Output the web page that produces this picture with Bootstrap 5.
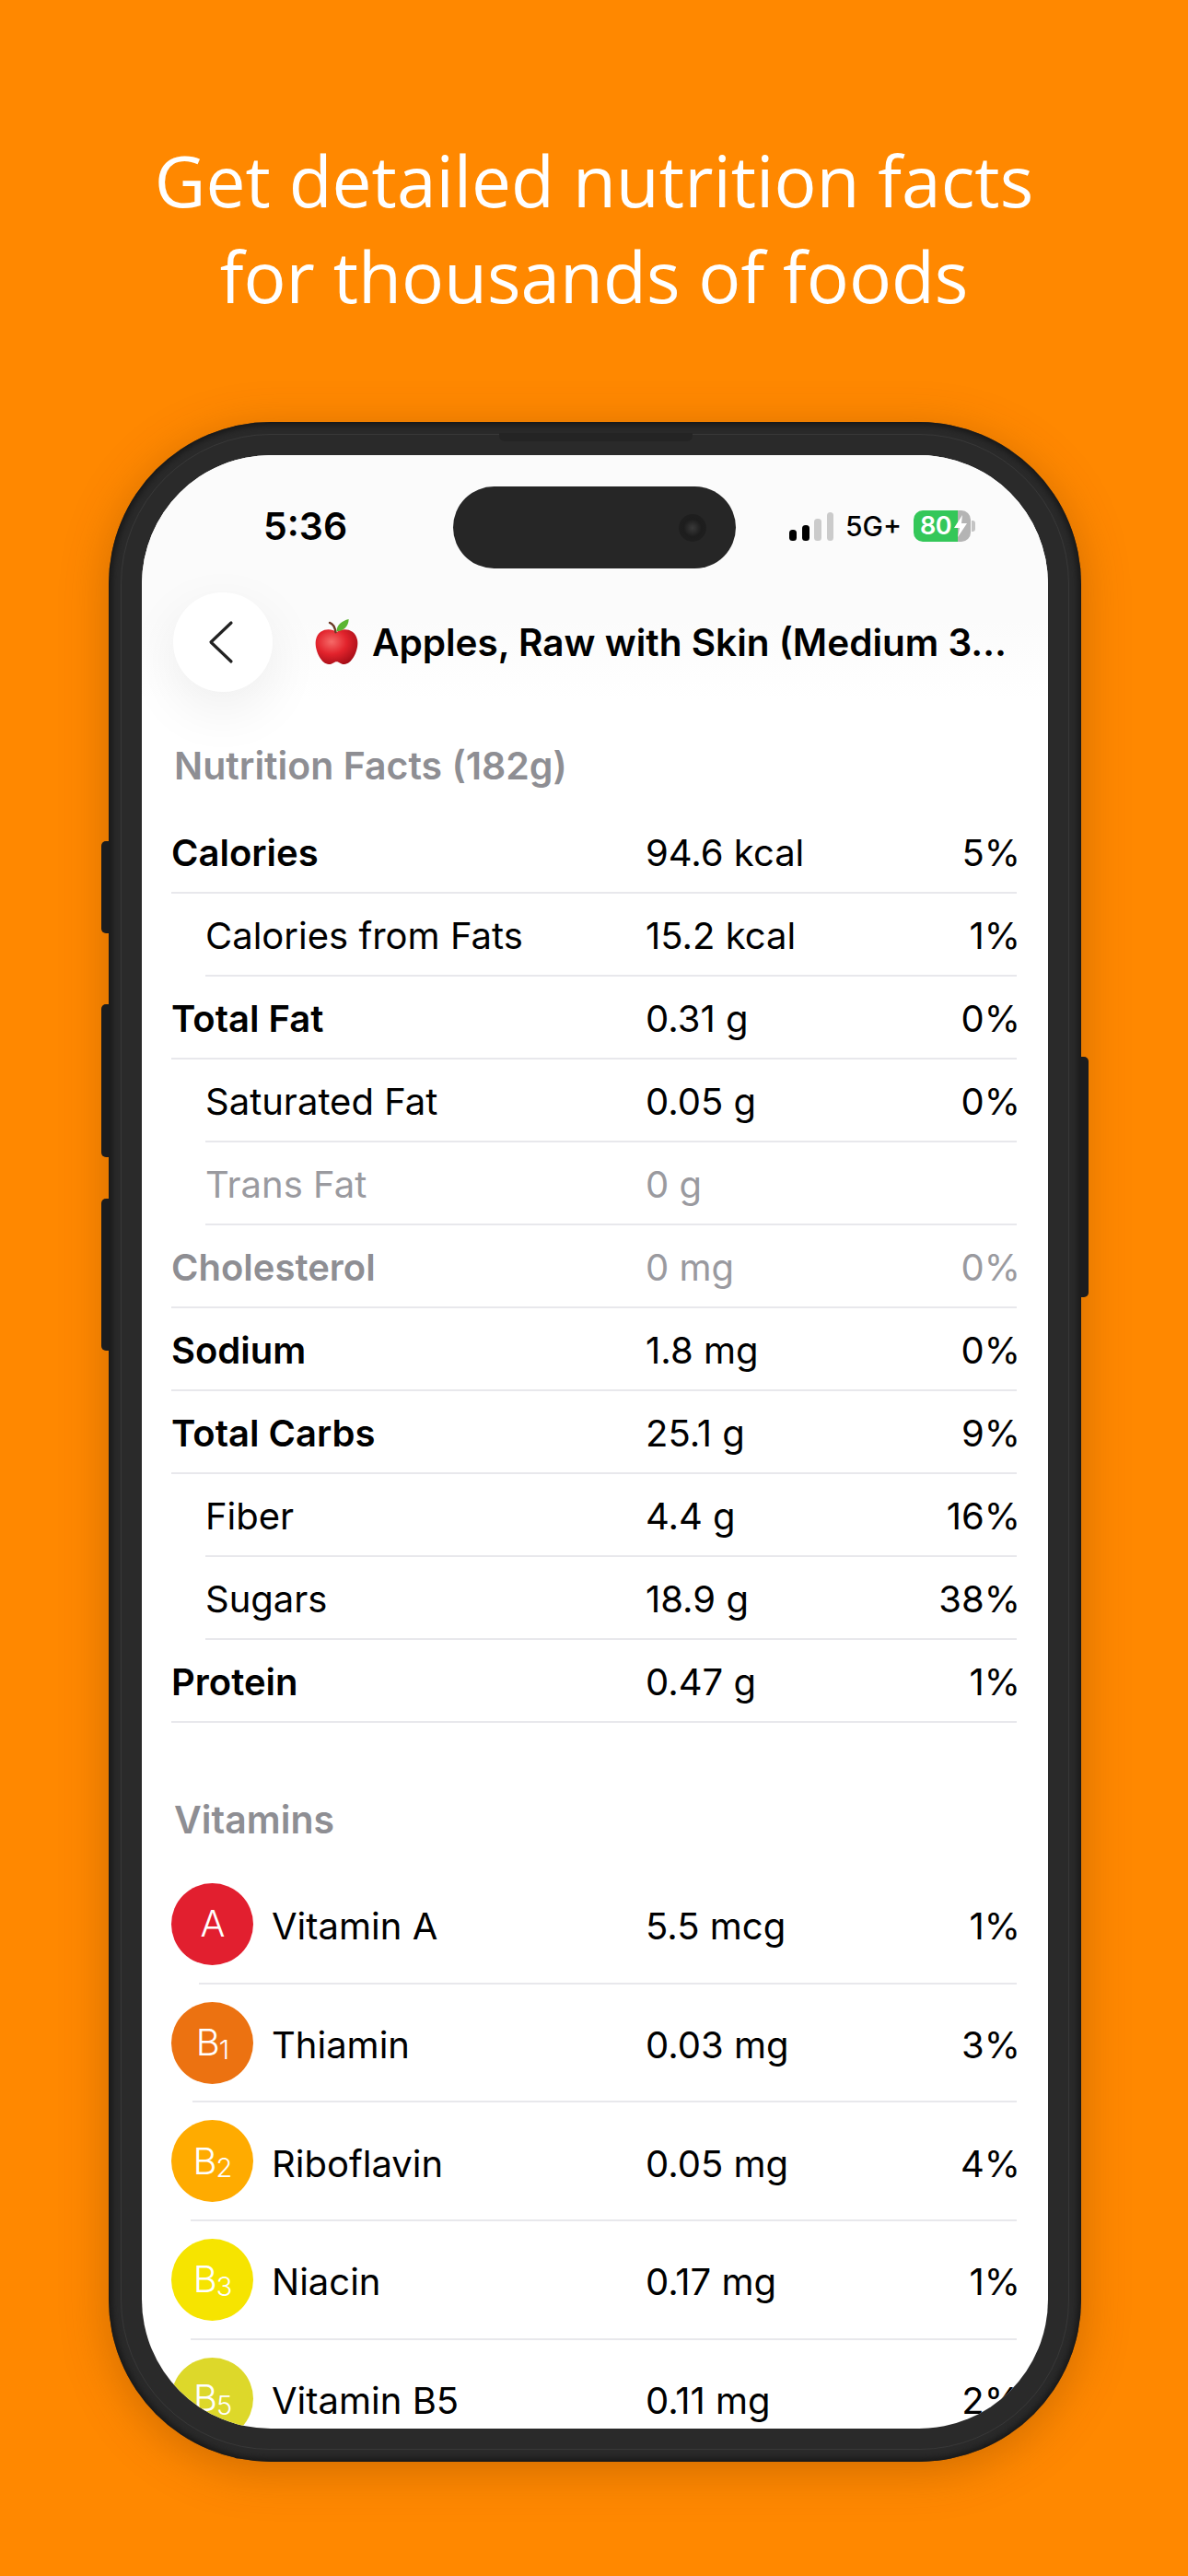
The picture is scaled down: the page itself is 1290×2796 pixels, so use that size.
<!DOCTYPE html>
<html lang="en">
<head>
  <meta charset="UTF-8">
  <title>Nutrition Facts</title>
  <link href="https://cdn.jsdelivr.net/npm/bootstrap@5.3.3/dist/css/bootstrap.min.css" rel="stylesheet">
  <style>
    body { background: #ff8800; width: 1290px; height: 2796px; overflow: hidden; font-family: Inter, "Liberation Sans", sans-serif; color: #000; }
    .promo-title { padding-top: 143px; height: 458px; margin: 0; font-family: "Open Sans", "Noto Sans", sans-serif; font-size: 76.6px; line-height: 104px; font-weight: 400; color: #fff; text-align: center; }

    .phone { position: relative; width: 1056px; height: 2214px; margin-left: 118px; padding: 36px; background: #2a2a2a; border-radius: 176px; box-shadow: 0 10px 50px rgba(120, 60, 0, .35), inset 0 0 7px 3px #161616; }
    .phone-rim { position: absolute; inset: 13px; border: 1px solid #383838; border-radius: 163px; pointer-events: none; }
    .phone-speaker { position: absolute; left: 424px; top: 12px; width: 210px; height: 9px; background: #242424; border-radius: 0 0 6px 6px; }
    .side-key { position: absolute; width: 9px; background: #1b1c1e; }
    .key-left { left: -8px; border-radius: 5px 0 0 5px; }
    .key-right { right: -8px; border-radius: 0 5px 5px 0; }
    .key-mute { top: 455px; height: 100px; }
    .key-up { top: 632px; height: 166px; }
    .key-down { top: 843px; height: 165px; }
    .key-power { top: 689px; height: 261px; }

    .phone-screen { position: relative; height: 100%; background: #fff; border-radius: 140px; overflow: hidden; }
    .top-fade { background: linear-gradient(#fbfbfb 0, #fbfbfb 68%, #fff 100%); height: 266px; }
    .island { position: absolute; left: 338px; top: 34px; width: 307px; height: 89px; background: #262626; border-radius: 45px; }
    .island-cam { position: absolute; right: 32px; top: 30px; width: 30px; height: 30px; border-radius: 50%; background: radial-gradient(circle, #3a3a3a 0, #1d1d1d 45%, #202020 100%); }

    .status-row { height: 149px; padding: 50px 79px 0 133px; }
    .status-time { font-size: 41px; line-height: 54px; font-weight: 600; margin-left: -1px; }
    .status-net { font-size: 30px; font-weight: 500; line-height: 54px; margin: 0 13px 0 13px; }
    .battery { position: relative; width: 62px; height: 34px; border-radius: 10px; background: linear-gradient(90deg, #34c759 78%, #b4b4b4 78%); color: #fff; font-size: 27px; line-height: 34px; font-weight: 600; padding-left: 7px; letter-spacing: -.5px; }
    .battery-bolt { position: absolute; right: 4px; top: 5px; }
    .battery-nub { width: 4px; height: 12px; background: #c4c4c4; border-radius: 0 3px 3px 0; margin-left: 1px; }

    .head-row { height: 108px; padding-left: 34px; }
    .back-btn { width: 108px; height: 108px; flex: none; background: #fff; border: 0; border-radius: 50%; padding: 0 5px 0 0; box-shadow: 0 20px 60px rgba(0, 0, 0, .07); }
    .head-apple { margin-left: 46px; flex: none; }
    .head-title { margin: 2px 0 0 15px; font-size: 40.5px; line-height: 50px; font-weight: 600; white-space: nowrap; }

    .group-title { margin: 0; font-size: 41px; line-height: 50px; font-weight: 600; color: #8e8e93; padding-left: 35px; }
    .group-nutrition { padding-top: 46px; padding-bottom: 24px; }
    .group-vitamins { padding-top: 80px; padding-bottom: 25px; }

    .facts-list { padding: 0 32px 0 32px; }
    .fact-row { height: 90px; margin-right: 2px; border-bottom: 2px solid #e8e8ec; font-size: 40px; line-height: 50px; padding-top: 4px; }
    .fact-sub { margin-left: 37px; }
    .fact-name { width: 515px; flex: none; }
    .fact-sub .fact-name { width: 478px; }
    .fact-val { flex: 1 1 auto; }
    .fact-pct { margin-right: -4px; }
    .fact-bold .fact-name { font-weight: 600; }
    .fact-off { color: #9a9a9f; }
    .fact-off.fact-bold .fact-name { color: #8e8e93; }

    .vit-row { height: 126.7px; font-size: 40px; line-height: 50px; }
    .vit-dot { width: 89px; height: 89px; flex: none; border-radius: 50%; color: #fff; font-size: 40px; font-weight: 300; margin-right: 20px; letter-spacing: -1px; }
    .vit-dot sub { font-size: 29px; bottom: -.12em; }
    .vit-name { width: 406px; flex: none; padding-top: 6px; }
    .vit-val { flex: 1 1 auto; padding-top: 6px; }
    .vit-pct { margin-right: -2px; padding-top: 6px; }
    .vit-line { height: 2px; margin: 0 2px 0 0; background: #e8e8ec; border: 0; opacity: 1; }
    .line-a { margin-left: 30px; }
    .line-b { margin-left: 23px; }
    .line-c { margin-left: 21px; }
    .dot-a { background: #e21f2f; }
    .dot-b1 { background: #ec7211; }
    .dot-b2 { background: #ffab00; }
    .dot-b3 { background: #f6e400; }
    .dot-b5 { background: #ddd82a; }
  </style>
</head>
<body>

<h1 class="promo-title">Get detailed nutrition facts<br>for thousands of foods</h1>

<div class="phone">
  <div class="phone-rim"></div>
  <div class="phone-speaker"></div>
  <div class="side-key key-left key-mute"></div>
  <div class="side-key key-left key-up"></div>
  <div class="side-key key-left key-down"></div>
  <div class="side-key key-right key-power"></div>

  <div class="phone-screen">
    <div class="top-fade">
      <div class="status-row d-flex justify-content-between align-items-start">
        <span class="status-time">5:36</span>
        <div class="d-flex align-items-center">
          <svg width="48" height="31" viewBox="0 0 48 31">
            <rect x="0" y="19" width="8" height="12" rx="3.5" fill="#000"/>
            <rect x="14" y="14" width="8" height="17" rx="3.5" fill="#000"/>
            <rect x="27" y="7" width="8" height="24" rx="3.5" fill="#cbcbcb"/>
            <rect x="41" y="0" width="7" height="31" rx="3.5" fill="#cbcbcb"/>
          </svg>
          <span class="status-net">5G+</span>
          <div class="battery">80
            <svg class="battery-bolt" width="14" height="24" viewBox="0 0 14 24"><path d="M9 0 L0 14 H6 L4 24 L14 9 H8 Z" fill="#fff"/></svg>
          </div>
          <div class="battery-nub"></div>
        </div>
      </div>
      <div class="head-row d-flex align-items-center">
        <button class="back-btn d-flex align-items-center justify-content-center" type="button" aria-label="Back">
          <svg width="28" height="48" viewBox="0 0 28 48"><path d="M25 3 L3 24 L25 45" fill="none" stroke="#222" stroke-width="3.2" stroke-linecap="round" stroke-linejoin="round"/></svg>
        </button>
        <svg class="head-apple" width="47" height="50" viewBox="0 0 50 53" role="img" aria-label="Red apple">
          <defs>
            <radialGradient id="appleRed" cx="38%" cy="35%" r="72%">
              <stop offset="0" stop-color="#f66a68"/>
              <stop offset=".5" stop-color="#e2232c"/>
              <stop offset="1" stop-color="#a30c16"/>
            </radialGradient>
          </defs>
          <path d="M25 15 C19 10 4 10 1 24 C-1 35 7 52 16 52 C20 52 22 49 25 49 C28 49 30 52 34 52 C43 52 51 35 49 24 C46 10 31 10 25 15 Z" fill="url(#appleRed)"/>
          <path d="M17 4 C20 5 23 9 24 15" fill="none" stroke="#6b3a26" stroke-width="2.5" stroke-linecap="round"/>
          <path d="M25 14 C25 7 31 2 39 0 C39 8 33 14 25 14 Z" fill="#5cb531"/>
        </svg>
        <h2 class="head-title">Apples, Raw with Skin (Medium 3…</h2>
      </div>
    </div>

    <h3 class="group-title group-nutrition">Nutrition Facts (182g)</h3>

    <div class="facts-list" id="facts"></div>

    <h3 class="group-title group-vitamins">Vitamins</h3>

    <div class="facts-list" id="vitamins"></div>

    <div class="island"><div class="island-cam"></div></div>
  </div>
</div>

<script>
  const facts = [
    ['Calories', '94.6 kcal', '5%', 'fact-bold'],
    ['Calories from Fats', '15.2 kcal', '1%', 'fact-sub'],
    ['Total Fat', '0.31 g', '0%', 'fact-bold'],
    ['Saturated Fat', '0.05 g', '0%', 'fact-sub'],
    ['Trans Fat', '0 g', '', 'fact-sub fact-off'],
    ['Cholesterol', '0 mg', '0%', 'fact-bold fact-off'],
    ['Sodium', '1.8 mg', '0%', 'fact-bold'],
    ['Total Carbs', '25.1 g', '9%', 'fact-bold'],
    ['Fiber', '4.4 g', '16%', 'fact-sub'],
    ['Sugars', '18.9 g', '38%', 'fact-sub'],
    ['Protein', '0.47 g', '1%', 'fact-bold']
  ];
  document.getElementById('facts').innerHTML = facts.map(f => `
    <div class="fact-row d-flex align-items-center ${f[3]}">
      <span class="fact-name">${f[0]}</span>
      <span class="fact-val">${f[1]}</span>
      <span class="fact-pct text-end">${f[2]}</span>
    </div>`).join('');

  const vitamins = [
    ['A', '', 'dot-a', 'Vitamin A', '5.5 mcg', '1%', 'line-a'],
    ['B', '1', 'dot-b1', 'Thiamin', '0.03 mg', '3%', 'line-b'],
    ['B', '2', 'dot-b2', 'Riboflavin', '0.05 mg', '4%', 'line-c'],
    ['B', '3', 'dot-b3', 'Niacin', '0.17 mg', '1%', 'line-c'],
    ['B', '5', 'dot-b5', 'Vitamin B5', '0.11 mg', '2%', 'line-c']
  ];
  document.getElementById('vitamins').innerHTML = vitamins.map(v => `
    <div class="vit-row d-flex align-items-center">
      <span class="vit-dot d-flex align-items-center justify-content-center ${v[2]}"><span>${v[0]}<sub>${v[1]}</sub></span></span>
      <span class="vit-name">${v[3]}</span>
      <span class="vit-val">${v[4]}</span>
      <span class="vit-pct text-end">${v[5]}</span>
    </div>
    <hr class="vit-line ${v[6]}">`).join('');
</script>

<script src="https://cdn.jsdelivr.net/npm/bootstrap@5.3.3/dist/js/bootstrap.bundle.min.js"></script>
</body>
</html>
